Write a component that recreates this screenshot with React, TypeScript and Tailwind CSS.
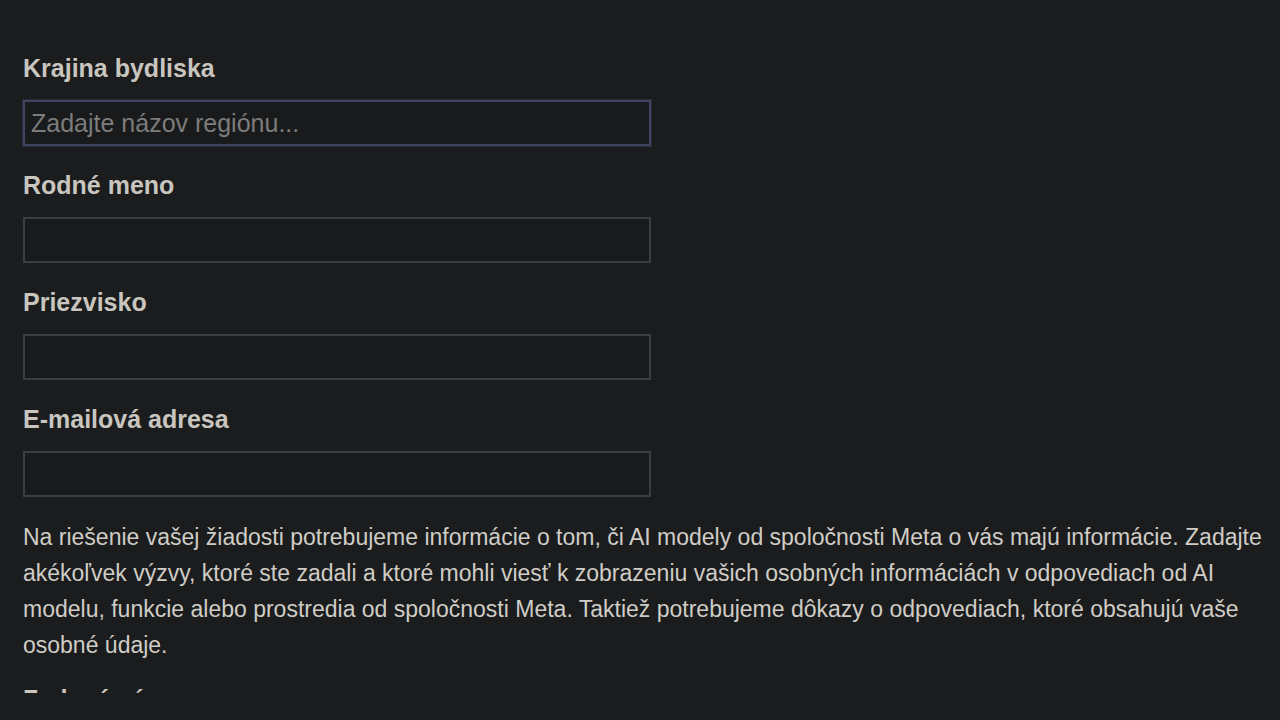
import React from "react";

const fields = [
    { id: "region", label: "Krajina bydliska", placeholder: "Zadajte názov regiónu...", focused: true },
    { id: "firstName", label: "Rodné meno" },
    { id: "lastName", label: "Priezvisko" },
    { id: "email", label: "E-mailová adresa" },
];

const infoLines = [
    "Na riešenie vašej žiadosti potrebujeme informácie o tom, či AI modely od spoločnosti Meta o vás majú informácie. Zadajte",
    "akékoľvek výzvy, ktoré ste zadali a ktoré mohli viesť k zobrazeniu vašich osobných informáciách v odpovediach od AI",
    "modelu, funkcie alebo prostredia od spoločnosti Meta. Taktiež potrebujeme dôkazy o odpovediach, ktoré obsahujú vaše",
    "osobné údaje.",
];

const App = () => {
    return (
        <div className="bg-[#1a1c1d] w-[1280px] h-[720px] overflow-hidden font-['Liberation_Sans',Arial,sans-serif]">
            <div className="h-[693px] overflow-hidden pl-[23px] pt-[53px]">
                {fields.map((f) => (
                    <div key={f.id} className="mb-[24px]">
                        <label htmlFor={f.id} className="block text-[25px] leading-[30px] font-bold text-[#c9c5bf] mb-[17px]">
                            {f.label}
                        </label>
                        <input
                            id={f.id}
                            type="text"
                            placeholder={f.placeholder}
                            className={
                                f.focused
                                    ? "block w-[628px] h-[46px] bg-[#181a1b] border-2 border-[#41445f] outline-1 outline-[#2a2c3c] px-[6px] text-[25px] text-[#cccccc] placeholder:text-[#7c7c7c]"
                                    : "block w-[628px] h-[46px] bg-[#181a1b] border-2 border-[#3b3e3f] px-[6px] text-[25px] text-[#cccccc]"
                            }
                        />
                    </div>
                ))}

                <p className="-mt-[2px] text-[23px] leading-[36px] text-[#d0ccc6]">
                    {infoLines.map((line, i) => (
                        <React.Fragment key={i}>
                            {line}
                            {i < infoLines.length - 1 && <br />}
                        </React.Fragment>
                    ))}
                </p>

                <div className="mt-[21px] text-[25px] leading-[30px] font-bold text-[#c9c5bf]">
                    Zadané výzvy
                </div>
            </div>
        </div>
    );
};

export default App;
